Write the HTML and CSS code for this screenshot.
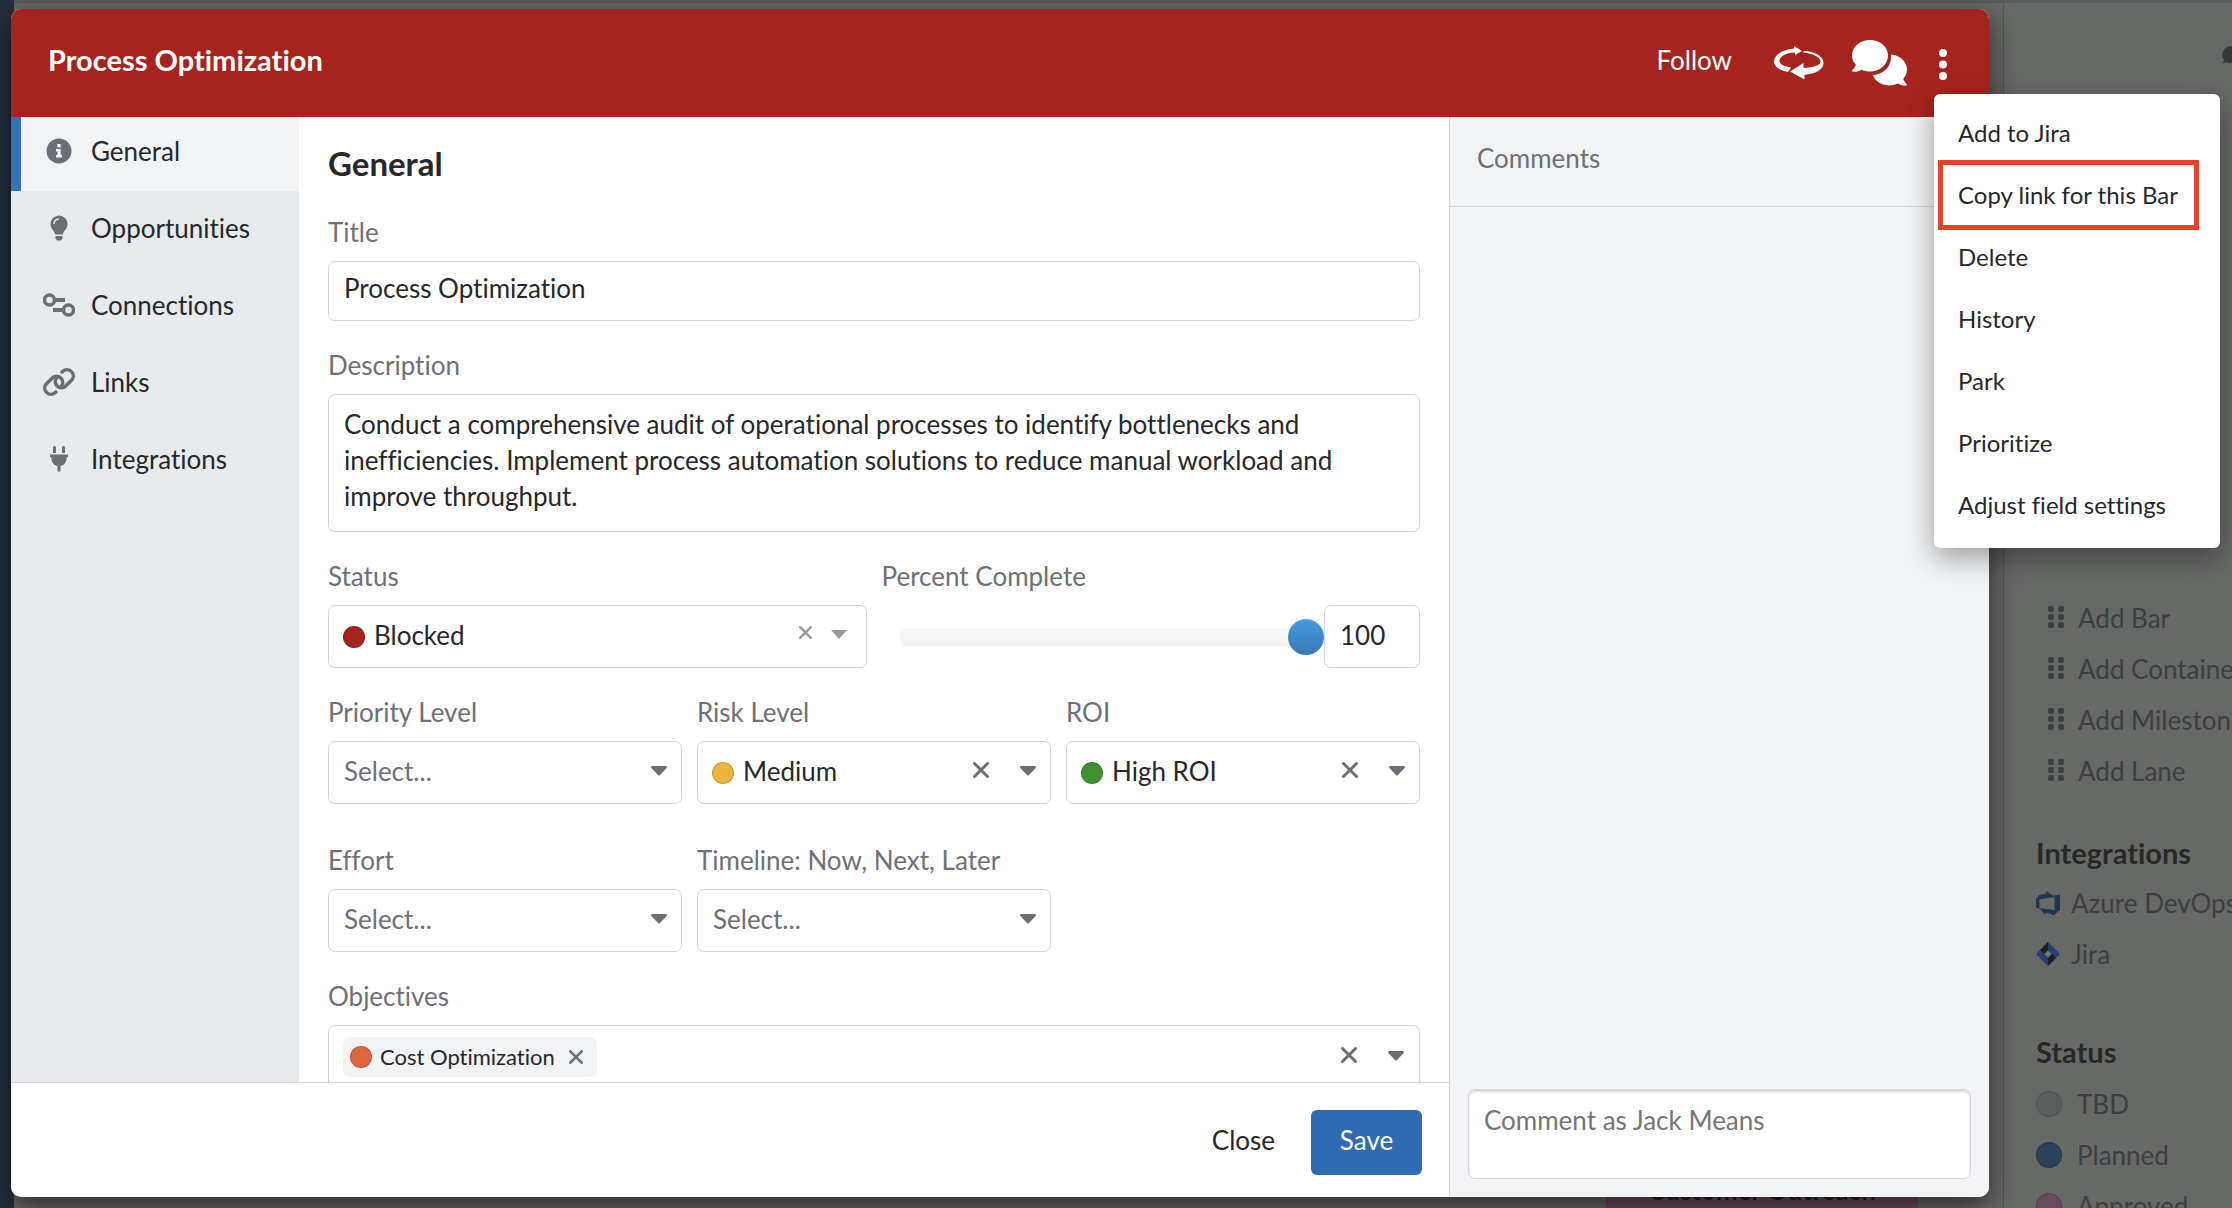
FILE: index.html
```html
<!DOCTYPE html>
<html lang="en">
<head>
    <meta charset="utf-8">
    <title>Process Optimization</title>
    <link rel="stylesheet" href="styles.css">
</head>
<body>
    <!-- Dimmed roadmap behind the dialog -->
    <div class="app">
        <div class="nav-rail"></div>
        <div class="canvas">
            <div class="bar">Customer Outreach</div>
        </div>
        <aside class="palette">
            <div class="palette-top">
                <svg class="palette-chat" viewBox="0 0 24 20"><path d="M9 0a9 9 0 0 1 0 17c-2 0-4-.4-5-1-1 .8-2.500 1.400-4 1.400 1-1 1.700-2.200 1.900-3.400A9 9 0 0 1 9 0z"/></svg>
            </div>
            <ul class="palette-list tools">
                <li><svg viewBox="0 0 16 24"><rect width="6" height="6" rx="2"/><rect x="10" width="6" height="6" rx="2"/><rect y="8" width="6" height="6" rx="2"/><rect x="10" y="8" width="6" height="6" rx="2"/><rect y="16" width="6" height="6" rx="2"/><rect x="10" y="16" width="6" height="6" rx="2"/></svg>Add Bar</li>
                <li><svg viewBox="0 0 16 24"><rect width="6" height="6" rx="2"/><rect x="10" width="6" height="6" rx="2"/><rect y="8" width="6" height="6" rx="2"/><rect x="10" y="8" width="6" height="6" rx="2"/><rect y="16" width="6" height="6" rx="2"/><rect x="10" y="16" width="6" height="6" rx="2"/></svg>Add Container</li>
                <li><svg viewBox="0 0 16 24"><rect width="6" height="6" rx="2"/><rect x="10" width="6" height="6" rx="2"/><rect y="8" width="6" height="6" rx="2"/><rect x="10" y="8" width="6" height="6" rx="2"/><rect y="16" width="6" height="6" rx="2"/><rect x="10" y="16" width="6" height="6" rx="2"/></svg>Add Milestone</li>
                <li><svg viewBox="0 0 16 24"><rect width="6" height="6" rx="2"/><rect x="10" width="6" height="6" rx="2"/><rect y="8" width="6" height="6" rx="2"/><rect x="10" y="8" width="6" height="6" rx="2"/><rect y="16" width="6" height="6" rx="2"/><rect x="10" y="16" width="6" height="6" rx="2"/></svg>Add Lane</li>
            </ul>
            <h3>Integrations</h3>
            <ul class="palette-list integrations">
                <li><svg viewBox="0 0 24 24"><path fill="#24364f" fill-rule="evenodd" d="M0 8l3-4 7-1.200V0l7.500 4.800 6.500-1V19l-6 5-8.500-2.500V24L4 18l-4-1.500zM3.500 8.500V17L18.500 19V6z"/></svg>Azure DevOps</li>
                <li><svg viewBox="0 0 24 24"><path fill="#2b3f6e" d="M12 0l12 12-12 12L0 12z"/><path fill="#1c1f22" d="M12 0v8l-4 4-4-4zM12 24v-8l4-4 4 4z"/><path fill="#73757a" d="M12 8.500l3.500 3.500-3.500 3.500L8.500 12z"/></svg>Jira</li>
            </ul>
            <h3>Status</h3>
            <ul class="palette-list statuses">
                <li><span class="status-dot tbd"></span>TBD</li>
                <li><span class="status-dot planned"></span>Planned</li>
                <li><span class="status-dot approved"></span>Approved</li>
            </ul>
        </aside>
    </div>

    <div class="dialog" role="dialog" aria-label="Process Optimization">
        <header class="dialog-header">
            <h1>Process Optimization</h1>
            <div class="header-actions">
                <button class="follow">Follow</button>
                <button class="icon-btn" aria-label="Switch">
                    <svg width="50" height="34" viewBox="0 0 50 34"><path d="M20 2.500V0l8 5-7 4V6.500C12 7 5.500 10 5.500 15c0 3.500 5 5.500 11.500 6.500l-3 4.500C6 24.500 0 21 0 15.500 0 8.500 9 3.500 20 2.500z"/><path d="M29.500 5C41 5.500 49.500 10 49.500 17c0 6.500-8 11-19 11.700V33.500L16 25.500l13.500-8.500v5C39 21.500 46.500 19.500 46.500 15.500c0-4.500-8-8-17-9z"/></svg>
                </button>
                <button class="icon-btn" aria-label="Comments">
                    <svg width="56" height="46" viewBox="0 0 56 46"><path d="M18 0c10 0 18 6.700 18 15.500S28 31.500 18 31.500c-3 0-6-.7-8.500-1.800C7 31.300 4 32 .8 31.700c-.8-.2-1-1.200-.4-1.700 1.800-1.700 3-3.700 3.400-5.500C1.300 22 0 19 0 15.500 0 6.700 8 0 18 0z"/><path d="M39 14.500c9 .8 16 7 16 15 0 3.500-1.400 6.600-3.700 9.200.4 2 1.600 3.600 3.300 5.300.6.500.3 1.500-.5 1.600-3 .3-5.800-.6-8.300-2-2.500 1.200-5.300 1.900-8.300 1.900-7.500 0-14-4-16.800-10.500C31.500 34.500 40 26.500 39 14.500z"/></svg>
                </button>
                <button class="icon-btn more" aria-label="More actions">
                    <svg width="10" height="34" viewBox="0 0 10 34"><circle cx="5" cy="5" r="4"/><circle cx="5" cy="16.500" r="4"/><circle cx="5" cy="28" r="4"/></svg>
                </button>
            </div>
        </header>

        <div class="dialog-body">
            <div class="editor">
                <div class="editor-body">
                    <nav class="sidebar">
                        <a class="side-link active" href="#general">
                            <svg width="32" height="28" viewBox="0 0 32 28"><circle cx="16" cy="14" r="12.500"/><path fill="#f1f3f5" d="M14.300 7h3.400v3.300h-3.400zM13 12h4.700v6H19v2.500h-6V18h1.500v-3.500H13z"/></svg>General</a>
                        <a class="side-link" href="#opportunities">
                            <svg width="32" height="28" viewBox="0 0 32 28"><path d="M16 1.500a8.500 8.500 0 0 0-8.500 8.700c0 4.800 4 6.300 4.700 10.300h7.600c.7-4 4.700-5.500 4.700-10.300A8.500 8.500 0 0 0 16 1.500z"/><path d="M12.500 22h7v2.500L18 26.500h-4l-1.500-2z"/><path d="M11 10c0-3 2-4.800 4.800-5" fill="none" stroke="#e7ebee" stroke-width="1.500"/></svg>Opportunities</a>
                        <a class="side-link" href="#connections">
                            <svg width="32" height="28" viewBox="0 0 32 28"><g fill="none" stroke="#6b6f75" stroke-width="3.500"><circle cx="6.500" cy="9" r="5"/><circle cx="25.500" cy="19" r="5"/></g><path d="M12 7h10v4H12zM10 17h10v4H10z"/></svg>Connections</a>
                        <a class="side-link" href="#links">
                            <svg width="32" height="28" viewBox="0 0 32 28"><g fill="none" stroke="#6b6f75" stroke-width="3.500" stroke-linecap="round"><path d="M13 24l-1 .7a6.200 6.200 0 0 1-8.700-8.800l6-6a6.200 6.200 0 0 1 8.900 8.600"/><path d="M19 4l1-.7a6.200 6.200 0 0 1 8.700 8.800l-6 6a6.200 6.200 0 0 1-8.900-8.600"/></g></svg>Links</a>
                        <a class="side-link" href="#integrations">
                            <svg width="32" height="28" viewBox="0 0 32 28"><path d="M10 2.500c0-2 3-2 3 0V8h-3zM19 2.500c0-2 3-2 3 0V8h-3zM7 9.500h18v2.500h-1.300c0 5-2 8-6.200 9v5.500h-3V21c-4.200-1-6.200-4-6.200-9H7z"/></svg>Integrations</a>
                    </nav>

                    <form class="form" id="general">
                        <h2>General</h2>
                        <div class="field">
                            <label for="title">Title</label>
                            <input class="control text" id="title" type="text" value="Process Optimization">
                        </div>
                        <div class="field">
                            <label for="description">Description</label>
                            <textarea class="control area" id="description">Conduct a comprehensive audit of operational processes to identify bottlenecks and inefficiencies. Implement process automation solutions to reduce manual workload and improve throughput.</textarea>
                        </div>
                        <div class="row">
                            <div class="field">
                                <label for="status">Status</label>
                                <div class="picker light">
                                    <span class="dot blocked"></span>
                                    <select class="control has-dot" id="status"><option>Blocked</option></select>
                                    <button type="button" class="clear" aria-label="Clear status"><svg viewBox="0 0 16 16"><path d="M1.500 1.500l13 13M14.500 1.500l-13 13"/></svg></button>
                                    <svg class="caret" viewBox="0 0 16 10"><path d="M0 0h16L8 9z"/></svg>
                                </div>
                            </div>
                            <div class="field">
                                <label for="percent">Percent Complete</label>
                                <div class="percent">
                                    <input class="slider" type="range" min="0" max="100" value="100" aria-label="Percent Complete">
                                    <input class="control number" id="percent" type="text" value="100">
                                </div>
                            </div>
                        </div>
                        <div class="row custom">
                            <div class="field">
                                <label for="priority">Priority Level</label>
                                <div class="picker">
                                    <select class="control empty" id="priority"><option>Select...</option></select>
                                    <svg class="caret" viewBox="0 0 16 10"><path d="M1.500 0h13c1.300 0 2 1.300 1 2.300L9 9c-.6.700-1.400.700-2 0L.5 2.300C-.5 1.300.2 0 1.500 0z"/></svg>
                                </div>
                            </div>
                            <div class="field">
                                <label for="risk">Risk Level</label>
                                <div class="picker">
                                    <span class="dot medium"></span>
                                    <select class="control has-dot" id="risk"><option>Medium</option></select>
                                    <button type="button" class="clear" aria-label="Clear risk level"><svg viewBox="0 0 16 16"><path d="M1.500 1.500l13 13M14.500 1.500l-13 13"/></svg></button>
                                    <svg class="caret" viewBox="0 0 16 10"><path d="M1.500 0h13c1.300 0 2 1.300 1 2.300L9 9c-.6.700-1.400.700-2 0L.5 2.300C-.5 1.300.2 0 1.500 0z"/></svg>
                                </div>
                            </div>
                            <div class="field">
                                <label for="roi">ROI</label>
                                <div class="picker">
                                    <span class="dot high"></span>
                                    <select class="control has-dot" id="roi"><option>High ROI</option></select>
                                    <button type="button" class="clear" aria-label="Clear ROI"><svg viewBox="0 0 16 16"><path d="M1.500 1.500l13 13M14.500 1.500l-13 13"/></svg></button>
                                    <svg class="caret" viewBox="0 0 16 10"><path d="M1.500 0h13c1.300 0 2 1.300 1 2.300L9 9c-.6.700-1.400.700-2 0L.5 2.300C-.5 1.300.2 0 1.500 0z"/></svg>
                                </div>
                            </div>
                        </div>
                        <div class="row thirds">
                            <div class="field">
                                <label for="effort">Effort</label>
                                <div class="picker">
                                    <select class="control empty" id="effort"><option>Select...</option></select>
                                    <svg class="caret" viewBox="0 0 16 10"><path d="M1.500 0h13c1.300 0 2 1.300 1 2.300L9 9c-.6.700-1.400.700-2 0L.5 2.300C-.5 1.300.2 0 1.500 0z"/></svg>
                                </div>
                            </div>
                            <div class="field">
                                <label for="timeline">Timeline: Now, Next, Later</label>
                                <div class="picker">
                                    <select class="control empty" id="timeline"><option>Select...</option></select>
                                    <svg class="caret" viewBox="0 0 16 10"><path d="M1.500 0h13c1.300 0 2 1.300 1 2.300L9 9c-.6.700-1.400.700-2 0L.5 2.300C-.5 1.300.2 0 1.500 0z"/></svg>
                                </div>
                            </div>
                        </div>
                        <div class="field">
                            <label for="objectives">Objectives</label>
                            <div class="picker tags">
                                <span class="tag">
                                    <span class="tag-dot"></span>Cost Optimization
                                    <button type="button" class="tag-remove" aria-label="Remove Cost Optimization"><svg viewBox="0 0 16 16"><path d="M1.500 1.500l13 13M14.500 1.500l-13 13"/></svg></button>
                                </span>
                                <input class="tag-input" id="objectives" type="text">
                                <button type="button" class="clear" aria-label="Clear objectives"><svg viewBox="0 0 16 16"><path d="M1.500 1.500l13 13M14.500 1.500l-13 13"/></svg></button>
                                <svg class="caret" viewBox="0 0 16 10"><path d="M1.500 0h13c1.300 0 2 1.300 1 2.300L9 9c-.6.700-1.400.700-2 0L.5 2.300C-.5 1.300.2 0 1.500 0z"/></svg>
                            </div>
                        </div>
                    </form>
                </div>
                <footer class="dialog-footer">
                    <button class="btn close">Close</button>
                    <button class="btn save">Save</button>
                </footer>
            </div>

            <section class="comments">
                <h2>Comments</h2>
                <textarea class="comment-box" placeholder="Comment as Jack Means" aria-label="Comment"></textarea>
            </section>
        </div>
    </div>

    <div class="menu" role="menu">
        <button role="menuitem">Add to Jira</button>
        <button role="menuitem" class="highlighted">Copy link for this Bar</button>
        <button role="menuitem">Delete</button>
        <button role="menuitem">History</button>
        <button role="menuitem">Park</button>
        <button role="menuitem">Prioritize</button>
        <button role="menuitem">Adjust field settings</button>
    </div>
</body>
</html>
```
FILE: styles.css
```css
* {
    box-sizing: border-box;
}

body {
    margin: 0;
    height: 100vh;
    overflow: hidden;
    font-family: Lato, "Open Sans", sans-serif;
    font-size: 26px;
    line-height: 36px;
    font-variant-ligatures: none;
    color: #262829;
    background: #676967;
}

button,
input,
select,
textarea {
    font: inherit;
    font-variant-ligatures: none;
    color: inherit;
}

button {
    background: none;
    border: none;
    padding: 0;
    cursor: pointer;
}

h1,
h2,
h3,
ul {
    margin: 0;
    padding: 0;
}

svg {
    display: block;
    flex: none;
}

/* Page behind the dialog */
.app {
    display: flex;
    height: 100vh;
    overflow: hidden;
    color: #3d3f41;
}

.nav-rail {
    width: 14px;
    background: #24303c;
}

.canvas {
    flex: 1;
    display: flex;
    align-items: flex-end;
    justify-content: flex-end;
    padding-right: 85px;
    border-top: 3px solid #5b5d5c;
    border-right: 1px solid #565858;
}

.bar {
    width: 312px;
    height: 50px;
    padding-top: 14px;
    text-align: center;
    font-weight: 700;
    background: #6f4f5f;
    color: #202224;
}

.palette {
    width: 228px;
    padding-left: 32px;
    border-top: 3px solid #5b5d5c;
    white-space: nowrap;
    overflow: hidden;
}

.palette-top {
    display: flex;
    justify-content: flex-end;
    height: 589px;
    padding-top: 43px;
}

.palette-chat {
    width: 24px;
    height: 20px;
    margin-right: -14px;
    fill: #36383a;
}

.palette h3 {
    font-size: 29px;
    line-height: 36px;
    color: #272929;
}

.palette-list {
    list-style: none;
}

.palette-list li {
    display: flex;
    align-items: center;
    height: 51px;
}

.tools {
    padding: 0 0 39px 12px;
}

.tools svg {
    width: 16px;
    height: 24px;
    margin-right: 14px;
    fill: #3b3d3f;
}

.integrations {
    padding: 6px 0 55px;
}

.integrations svg {
    width: 24px;
    height: 24px;
    margin-right: 11px;
}

.statuses {
    padding-top: 8px;
}

.status-dot {
    width: 26px;
    height: 26px;
    margin-right: 15px;
    border-radius: 50%;
    border: 1px solid rgba(0, 0, 0, 0.15);
}

.tbd {
    background: #5d5f5e;
}

.planned {
    background: #2c4258;
}

.approved {
    background: #664d5e;
}

/* Dialog */
.dialog {
    position: absolute;
    top: 9px;
    right: 243px;
    bottom: 11px;
    left: 11px;
    display: flex;
    flex-direction: column;
    border-radius: 10px;
    background: #fff;
    overflow: hidden;
    box-shadow: 0 10px 30px rgba(0, 0, 0, 0.6);
}

.dialog-header {
    display: flex;
    align-items: center;
    justify-content: space-between;
    height: 108px;
    padding: 0 41px 6px 37px;
    background: #a5241d;
    color: #fff;
}

.dialog-header h1 {
    font-size: 29px;
    line-height: 36px;
}

.header-actions {
    display: flex;
    align-items: center;
}

.follow {
    margin-right: 42px;
}

.icon-btn {
    margin: 6px 28px 0 0;
}

.icon-btn svg {
    fill: #fff;
}

.icon-btn.more {
    margin: 10px 0 0 2px;
}

.dialog-body {
    flex: 1;
    display: flex;
    min-height: 0;
}

.editor {
    flex: 1;
    display: flex;
    flex-direction: column;
    min-width: 0;
}

.editor-body {
    flex: 1;
    display: flex;
    min-height: 0;
}

.sidebar {
    width: 288px;
    background: #e7ebee;
}

.side-link {
    display: flex;
    align-items: center;
    height: 74px;
    margin-bottom: 3px;
    padding: 0 0 6px 32px;
    color: inherit;
    text-decoration: none;
}

.side-link.active {
    padding-left: 22px;
    border-left: 10px solid #3771b8;
    background: #f1f3f5;
}

.side-link svg {
    margin-right: 16px;
    fill: #6b6f75;
}

.form {
    flex: 1;
    min-width: 0;
    padding: 28px 29px 0;
    overflow: hidden;
}

.form h2 {
    margin-bottom: 33px;
    font-size: 33px;
    line-height: 36px;
}

.field {
    margin-bottom: 26px;
}

.field label {
    display: block;
    margin-bottom: 11px;
    color: #6d7075;
}

.control {
    display: block;
    width: 100%;
    height: 63px;
    margin: 0;
    padding: 0 15px 4px;
    border: 1px solid #d2d4d9;
    border-radius: 7px;
    background: #fff;
    appearance: none;
    outline: none;
}

.control.text {
    height: 60px;
    padding-bottom: 6px;
}

.control.area {
    height: 138px;
    padding-top: 11px;
    resize: none;
    overflow: hidden;
}

.control.empty {
    color: #6d7075;
}

.control.has-dot {
    padding-left: 45px;
}

.row {
    display: grid;
    grid-template-columns: 1fr 1fr;
    gap: 15px;
}

.row.custom,
.row.thirds {
    grid-template-columns: 1fr 1fr 1fr;
}

.row.custom {
    margin-bottom: 12px;
}

.picker {
    position: relative;
}

.dot {
    position: absolute;
    top: 21px;
    left: 15px;
    width: 22px;
    height: 22px;
    border-radius: 50%;
    border: 1px solid rgba(0, 0, 0, 0.15);
    pointer-events: none;
}

.blocked {
    background: #a5241d;
}

.medium {
    background: #edb53d;
}

.high {
    background: #3f9234;
}

.clear {
    position: absolute;
    top: 21px;
    right: 62px;
}

.clear svg,
.tag-remove svg {
    width: 16px;
    height: 16px;
    fill: none;
    stroke: #6b6f75;
    stroke-width: 3;
    stroke-linecap: round;
}

.caret {
    position: absolute;
    top: 25px;
    right: 15px;
    width: 16px;
    height: 10px;
    fill: #6b6f75;
    pointer-events: none;
}

.light .clear {
    right: 55px;
}

.light .clear svg {
    width: 13px;
    height: 13px;
    stroke: #999;
}

.light .caret {
    right: 20px;
    fill: #999;
}

.percent {
    display: flex;
    align-items: center;
    padding-left: 18px;
}

.slider {
    flex: 1;
    min-width: 0;
    height: 36px;
    margin: 0;
    appearance: none;
    background: none;
}

.slider::-webkit-slider-runnable-track {
    height: 18px;
    border-radius: 7px;
    background: linear-gradient(#f9f9f9, #f4f4f4) no-repeat;
    background-size: calc(100% - 18px) 100%;
}

.slider::-webkit-slider-thumb {
    appearance: none;
    width: 36px;
    height: 36px;
    margin-top: -9px;
    border-radius: 50%;
    background: linear-gradient(#469ade, #3878b5);
    box-shadow: inset 0 1px 0 rgba(255, 255, 255, 0.2), 0 1px 2px rgba(0, 0, 0, 0.05);
}

.control.number {
    width: 96px;
}

.tags {
    display: flex;
    align-items: flex-start;
    height: 66px;
    padding: 11px 14px;
    border: 1px solid #d2d4d9;
    border-radius: 7px;
}

.tag {
    display: flex;
    align-items: center;
    height: 40px;
    padding: 0 14px 0 7px;
    border-radius: 7px;
    background: #f1f3f5;
    font-size: 22px;
}

.tag-dot {
    width: 22px;
    height: 22px;
    margin-right: 8px;
    border-radius: 50%;
    border: 1px solid rgba(0, 0, 0, 0.15);
    background: #de683e;
}

.tag-remove {
    margin-left: 14px;
}

.tag-remove svg {
    width: 14px;
    height: 14px;
}

.tag-input {
    flex: 1;
    min-width: 0;
    height: 40px;
    border: none;
    outline: none;
    background: none;
}

.dialog-footer {
    display: flex;
    align-items: flex-start;
    justify-content: flex-end;
    gap: 36px;
    height: 115px;
    padding: 27px 27px 0 0;
    border-top: 1px solid #d2d4d9;
}

.btn {
    height: 65px;
    padding-bottom: 5px;
}

.save {
    width: 111px;
    border-radius: 6px;
    background: #306ab3;
    color: #fff;
}

.comments {
    display: flex;
    flex-direction: column;
    justify-content: space-between;
    width: 540px;
    border-left: 1px solid #d2d4d9;
    background: #f1f3f5;
}

.comments h2 {
    height: 90px;
    padding: 23px 27px 0;
    border-bottom: 1px solid #d2d4d9;
    font-size: 26px;
    line-height: 36px;
    font-weight: 400;
    color: #6d7075;
}

.comment-box {
    display: block;
    height: 90px;
    margin: 0 18px 18px;
    padding: 12px 15px;
    border: 1px solid #d2d4d9;
    border-radius: 7px;
    box-shadow: inset 0 2px 2px rgba(0, 0, 0, 0.15);
    background: #fff;
    resize: none;
    outline: none;
}

.comment-box::placeholder {
    color: #757575;
}

/* Actions menu */
.menu {
    position: absolute;
    top: 94px;
    right: 12px;
    width: 286px;
    padding: 8px 25px 12px 8px;
    border-radius: 6px;
    background: #fff;
    box-shadow: 0 10px 28px rgba(0, 0, 0, 0.35);
}

.menu button {
    display: block;
    width: 100%;
    height: 62px;
    padding-left: 16px;
    text-align: left;
    font-size: 24px;
}

.menu .highlighted {
    outline: 5px solid #ea4025;
    outline-offset: -1px;
}
```
